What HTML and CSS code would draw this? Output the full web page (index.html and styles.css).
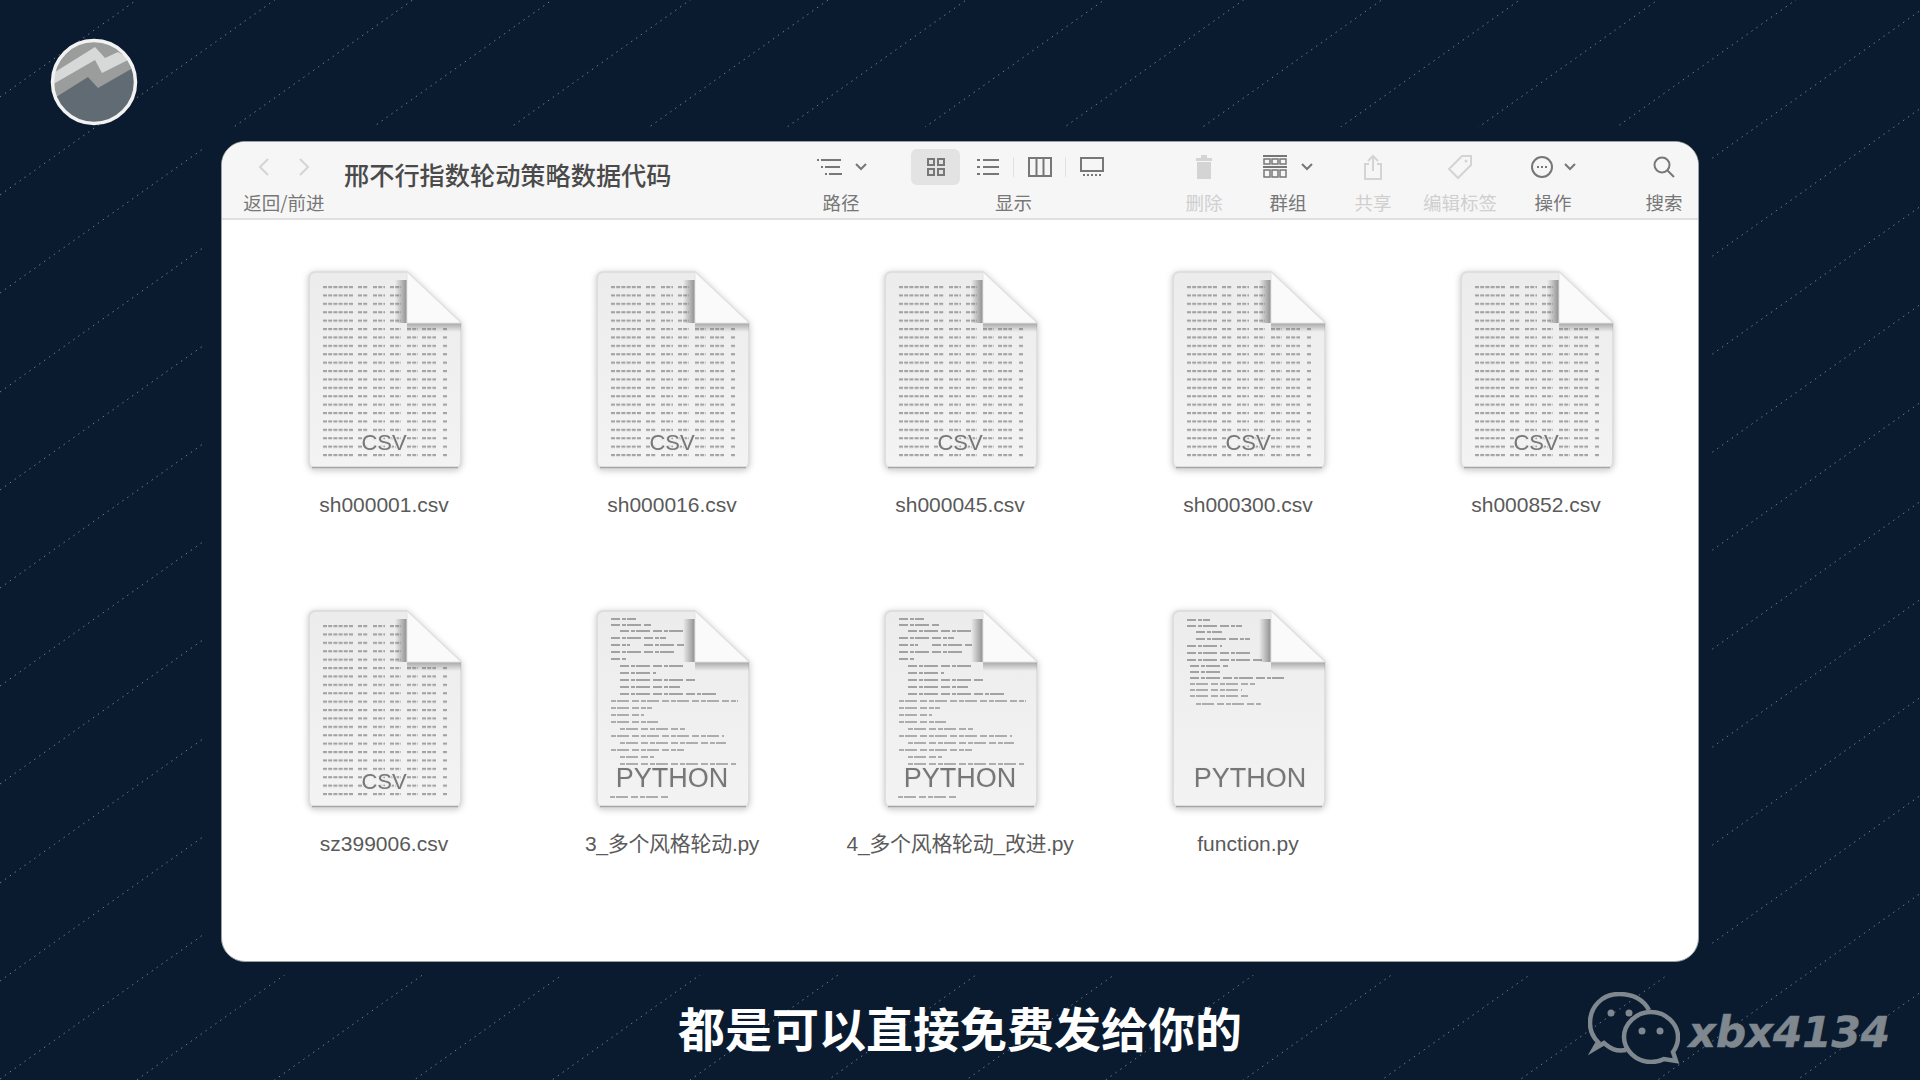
FILE: index.html
```html
<!DOCTYPE html>
<html lang="zh-CN">
<head>
	<title>邢不行指数轮动策略数据代码</title>
	<meta charset="utf-8">
	<link rel="stylesheet" href="styles.css">
</head>
<body>
<svg class="defs">
	<defs>
		<linearGradient id="page" x1="0" y1="0" x2="0" y2="1">
			<stop offset="0" stop-color="#ececec"/>
			<stop offset="1" stop-color="#f3f3f3"/>
		</linearGradient>
		<linearGradient id="fold-left" x1="0" y1="0" x2="1" y2="0">
			<stop offset="0" stop-color="#777" stop-opacity="0"/>
			<stop offset="1" stop-color="#777" stop-opacity=".8"/>
		</linearGradient>
		<linearGradient id="fold-below" x1="0" y1="0" x2="0" y2="1">
			<stop offset="0" stop-color="#777" stop-opacity=".6"/>
			<stop offset="1" stop-color="#777" stop-opacity="0"/>
		</linearGradient>
		<pattern id="rows" x="15" y="15" width="125" height="8.4" patternUnits="userSpaceOnUse">
			<path d="M0 1H30M35 1H45M50 1H62M67 1H78M84 1H95M99 1H113M120 1H124" stroke="#a2a2a2" stroke-width="2" stroke-dasharray="4 1.2" fill="none"/>
		</pattern>
		<clipPath id="margins">
			<path clip-rule="evenodd" d="M0 0H1920V1080H0ZM203 127H1712V975H203Z"/>
		</clipPath>
		<clipPath id="logo-clip"><circle cx="44" cy="44" r="41"/></clipPath>
		<symbol id="doc" viewBox="0 0 156 200">
			<path d="M8 1H99L153 52V190Q153 198 145 198H9Q1 198 1 190V8Q1 1 8 1Z" fill="url(#page)" stroke="#dedede" stroke-width="2"/>
			<path d="M4 196.500H150" stroke="#a4a4a4" stroke-width="1.5"/>
		</symbol>
		<symbol id="fold" viewBox="0 0 156 200">
			<rect x="87" y="9" width="12" height="43" fill="url(#fold-left)"/>
			<rect x="99" y="52" width="54" height="9" fill="url(#fold-below)"/>
			<path d="M99 1L153 52H99Z" fill="#fafafa" stroke="#e2e2e2"/>
		</symbol>
		<symbol id="csv" viewBox="0 0 156 200">
			<use href="#doc"/>
			<g class="doc-lines">
				<rect x="15" y="15" width="78" height="42" fill="url(#rows)"/>
				<rect x="15" y="57" width="125" height="134" fill="url(#rows)"/>
			</g>
			<use href="#fold"/>
			<text class="doc-type" x="76" y="179" font-size="22">CSV</text>
		</symbol>
		<symbol id="py" viewBox="0 0 156 200">
			<use href="#doc"/>
			<g class="doc-lines">
				<path class="code-a" d="M15 9H40M15 15H55M24 21H88M15 28H70M15 35H34M48 35H88M15 42H78M15 49H30M24 56H88M24 63H60M24 70H100M24 77H84M24 84H120"/>
				<path class="code-b" d="M15 91H142M15 98H56M15 105H48M15 112H62M24 119H90M15 126H128M24 133H130M15 140H88M24 147H58M24 154H140"/>
				<path class="code-b" d="M14 187H74"/>
			</g>
			<use href="#fold"/>
			<text class="doc-type" x="76" y="177" font-size="27">PYTHON</text>
		</symbol>
		<symbol id="py-short" viewBox="0 0 156 200">
			<use href="#doc"/>
			<g class="doc-lines">
				<path class="code-a" d="M15 10H38M15 16H70M24 22H50M24 29H78M15 36H50M15 43H80M15 50H90M18 56H56M18 62H50M18 68H112"/>
				<path class="code-b" d="M18 74H84M18 80H70M18 86H76M24 94H90"/>
			</g>
			<use href="#fold"/>
			<text class="doc-type" x="78" y="177" font-size="27">PYTHON</text>
		</symbol>
	</defs>
</svg>

<div class="stage">
	<svg class="streaks" width="1920" height="1080">
		<path clip-path="url(#margins)" d="M0 97l2704-1920M0 195l2704-1920M0 293l2704-1920M0 392l2704-1920M0 490l2704-1920M0 588l2704-1920M0 686l2704-1920M0 784l2704-1920M0 883l2704-1920M0 981l2704-1920M0 1079l2704-1920M0 1177l2704-1920M0 1275l2704-1920M0 1374l2704-1920M0 1472l2704-1920M0 1570l2704-1920M0 1668l2704-1920M0 1766l2704-1920M0 1865l2704-1920M0 1963l2704-1920M0 2061l2704-1920M0 2159l2704-1920M0 2257l2704-1920M0 2356l2704-1920M0 2454l2704-1920"/>
	</svg>

	<header class="top">
		<svg class="logo" width="88" height="88" viewBox="0 0 88 88">
			<circle cx="44" cy="44" r="42" fill="#9b9d9d"/>
			<g clip-path="url(#logo-clip)">
				<path d="M0 37L45 9L55 20L68 14L80 21L52 35L45 22L0 48Z" fill="#d7d8d8"/>
				<path d="M0 63L38 39L48 50L88 27V88H0Z" fill="#606b73"/>
			</g>
			<circle cx="44" cy="44" r="41.500" fill="none" stroke="#f2f2f2" stroke-width="3.500"/>
		</svg>
	</header>

	<main class="window">
		<div class="toolbar">
			<div class="tool tool-nav">
				<div class="tool-icons nav-icons">
					<svg width="20" height="24" viewBox="0 0 20 24"><path class="ic-faint" d="M14 4L6 12L14 20"/></svg>
					<svg width="20" height="24" viewBox="0 0 20 24"><path class="ic-faint" d="M6 4L14 12L6 20"/></svg>
				</div>
				<div class="tool-label">返回/前进</div>
			</div>
			<h1 class="title">邢不行指数轮动策略数据代码</h1>
			<div class="tool tool-path">
				<div class="tool-icons">
					<svg width="28" height="20" viewBox="0 0 28 20"><path class="ic" d="M1 3H3M5 3H25M5 10H7M9 10H24M9 17H11M13 17H26"/></svg>
					<svg class="chev" width="12" height="8" viewBox="0 0 12 8"><path class="ic" d="M1 1L6 6L11 1"/></svg>
				</div>
				<div class="tool-label">路径</div>
			</div>
			<div class="tool tool-view">
				<div class="tool-icons view-icons">
					<div class="view-btn active">
						<svg width="20" height="20" viewBox="0 0 20 20"><path class="ic" d="M2 2H8V8H2ZM12 2H18V8H12ZM2 12H8V18H2ZM12 12H18V18H12Z"/></svg>
					</div>
					<div class="view-btn">
						<svg width="22" height="18" viewBox="0 0 22 18"><path class="ic" d="M0 2H3M6 2H22M0 9H3M6 9H22M0 16H3M6 16H22"/></svg>
					</div>
					<div class="view-btn sep">
						<svg width="24" height="20" viewBox="0 0 24 20"><path class="ic" d="M1 1H23V19H1ZM8.500 1V19M15.500 1V19"/></svg>
					</div>
					<div class="view-btn sep">
						<svg width="24" height="20" viewBox="0 0 24 20"><path class="ic" d="M1 1H23V14H1Z"/><path class="ic" stroke-dasharray="2 2" d="M3 18H22"/></svg>
					</div>
				</div>
				<div class="tool-label">显示</div>
			</div>
			<div class="tool tool-delete">
				<div class="tool-icons">
					<svg width="18" height="26" viewBox="0 0 18 26"><path d="M6 1H12V4H17V7H1V4H6ZM2 8H16V25H2Z" fill="#d4d4d4"/></svg>
				</div>
				<div class="tool-label faint">删除</div>
			</div>
			<div class="tool tool-group">
				<div class="tool-icons">
					<svg width="24" height="24" viewBox="0 0 24 24"><path class="ic" d="M0 1H24M0 12H24"/><path class="ic-thin" d="M1 4H7V9H1ZM9 4H15V9H9ZM17 4H23V9H17ZM1 15H7V22H1ZM9 15H15V22H9ZM17 15H23V22H17Z"/></svg>
					<svg class="chev chev-far" width="12" height="8" viewBox="0 0 12 8"><path class="ic" d="M1 1L6 6L11 1"/></svg>
				</div>
				<div class="tool-label">群组</div>
			</div>
			<div class="tool tool-share">
				<div class="tool-icons">
					<svg width="20" height="26" viewBox="0 0 20 26"><path class="ic-faint" d="M6 10H2V25H18V10H14M10 17V2M5 7L10 2L15 7"/></svg>
				</div>
				<div class="tool-label faint">共享</div>
			</div>
			<div class="tool tool-tag">
				<div class="tool-icons">
					<svg width="26" height="26" viewBox="0 0 26 26"><path class="ic-faint" d="M15 2H24V11L11 24L2 15Z"/><circle cx="19" cy="7" r="1.500" fill="#d4d4d4"/></svg>
				</div>
				<div class="tool-label faint">编辑标签</div>
			</div>
			<div class="tool tool-ops">
				<div class="tool-icons">
					<svg width="22" height="22" viewBox="0 0 22 22"><circle class="ic" cx="11" cy="11" r="10"/><path d="M6 10h2v2H6zM10 10h2v2h-2zM14 10h2v2h-2z" fill="#777"/></svg>
					<svg class="chev" width="12" height="8" viewBox="0 0 12 8"><path class="ic" d="M1 1L6 6L11 1"/></svg>
				</div>
				<div class="tool-label">操作</div>
			</div>
			<div class="tool tool-search">
				<div class="tool-icons">
					<svg width="22" height="22" viewBox="0 0 22 22"><circle class="ic" cx="9" cy="9" r="7.500"/><path class="ic" d="M14.500 14.500L21 21"/></svg>
				</div>
				<div class="tool-label">搜索</div>
			</div>
		</div>

		<div class="files">
			<div class="file"><svg class="file-icon"><use href="#csv"/></svg><div class="file-name">sh000001.csv</div></div>
			<div class="file"><svg class="file-icon"><use href="#csv"/></svg><div class="file-name">sh000016.csv</div></div>
			<div class="file"><svg class="file-icon"><use href="#csv"/></svg><div class="file-name">sh000045.csv</div></div>
			<div class="file"><svg class="file-icon"><use href="#csv"/></svg><div class="file-name">sh000300.csv</div></div>
			<div class="file"><svg class="file-icon"><use href="#csv"/></svg><div class="file-name">sh000852.csv</div></div>
			<div class="file"><svg class="file-icon"><use href="#csv"/></svg><div class="file-name">sz399006.csv</div></div>
			<div class="file"><svg class="file-icon"><use href="#py"/></svg><div class="file-name wide">3_多个风格轮动.py</div></div>
			<div class="file"><svg class="file-icon"><use href="#py"/></svg><div class="file-name wide">4_多个风格轮动_改进.py</div></div>
			<div class="file"><svg class="file-icon"><use href="#py-short"/></svg><div class="file-name">function.py</div></div>
		</div>
	</main>

	<footer class="bottom">
		<div></div>
		<div class="caption">都是可以直接免费发给你的</div>
		<div class="watermark">
			<svg width="92" height="72" viewBox="0 0 92 72">
				<path class="wm-line" d="M61 18C55 7 44 2 31 2C14 2 2 15 2 31C2 39 5 45 10 50L6 57L16 51C21 55 26 60 38 58"/>
				<path class="wm-line" d="M63 20C48 20 36 32 36 45C36 58 48 70 63 70C68 70 72 69 76 67L88 69L85 60C88 56 90 51 90 45C90 32 78 20 63 20Z"/>
				<circle cx="23" cy="21" r="3.500" fill="#7f878f"/>
				<circle cx="41" cy="21" r="3.500" fill="#7f878f"/>
				<circle cx="54" cy="39" r="3.500" fill="#7f878f"/>
				<circle cx="72" cy="39" r="3.500" fill="#7f878f"/>
			</svg>
			<span class="wm-text">xbx4134</span>
		</div>
	</footer>
</div>
</body>
</html>
```

FILE: styles.css
```css
* {
	box-sizing: border-box;
}
body {
	margin: 0;
	font-family: "Liberation Sans", "Noto Sans CJK SC", sans-serif;
}
.defs {
	position: absolute;
	width: 0;
	height: 0;
}
.stage {
	position: relative;
	width: 1920px;
	height: 1080px;
	overflow: hidden;
	background: #0a1b2f;
}
.streaks {
	position: absolute;
	left: 0;
	top: 0;
}
.streaks path {
	fill: none;
	stroke: #fff;
	stroke-opacity: .42;
	stroke-width: 1;
	stroke-dasharray: 1.5 4.5;
}
.top {
	position: relative;
	height: 141px;
	padding: 38px 0 0 50px;
}
.logo {
	display: block;
}

/* window */
.window {
	position: relative;
	width: 1478px;
	height: 821px;
	margin-left: 221px;
	background: #fff;
	border: 1px solid #9c9fa3;
	border-radius: 24px;
	overflow: hidden;
}
.toolbar {
	display: flex;
	height: 78px;
	padding: 7px 0 0 20px;
	background: #f6f6f6;
	border-bottom: 2px solid #e0e0e0;
}
.title {
	margin: 8px 0 0 18px;
	width: 326px;
	font: 500 25.200px/34px "Noto Sans CJK SC", sans-serif;
	color: #4a4a4a;
	white-space: nowrap;
}
.tool {
	display: flex;
	flex-direction: column;
	align-items: center;
	flex: none;
}
.tool-icons {
	display: flex;
	align-items: center;
	justify-content: center;
	height: 36px;
}
.tool-label {
	margin-top: 5px;
	font: 18.500px/24px "Noto Sans CJK SC", sans-serif;
	color: #777;
	white-space: nowrap;
}
.tool-label.faint {
	color: #cfcfcf;
}
.chev {
	margin-left: 11px;
}
.chev-far {
	margin-left: 14px;
}
.nav-icons {
	gap: 20px;
}
.tool-nav { width: 84px; }
.tool-path { width: 70px; margin-left: 136px; }
.tool-view { width: 205px; margin-left: 35px; }
.tool-delete { width: 60px; margin-left: 58px; }
.tool-group { width: 60px; margin-left: 24px; }
.tool-share { width: 60px; margin-left: 25px; }
.tool-tag { width: 84px; margin-left: 15px; }
.tool-ops { width: 60px; margin-left: 21px; }
.tool-search { width: 60px; margin-left: 51px; }
.view-icons {
	gap: 3px;
}
.view-btn {
	position: relative;
	display: flex;
	align-items: center;
	justify-content: center;
	width: 49px;
	height: 36px;
	border-radius: 6px;
}
.view-btn.active {
	background: #e3e3e3;
}
.view-btn.sep::before {
	content: "";
	position: absolute;
	left: -2px;
	top: 8px;
	height: 20px;
	border-left: 1px solid #e2e2e2;
}
.ic, .ic-thin, .ic-faint {
	fill: none;
	stroke: #777;
	stroke-width: 2;
}
.ic-thin {
	stroke-width: 1.5;
}
.ic-faint {
	stroke: #d4d4d4;
}

/* files */
.files {
	display: grid;
	grid-template-columns: repeat(5, 288px);
	grid-auto-rows: 246px;
	row-gap: 93px;
	padding: 51px 0 0 18px;
}
.file {
	display: flex;
	flex-direction: column;
	align-items: center;
}
.file-icon {
	width: 156px;
	height: 200px;
	margin: 0 0 22px 3px;
	flex: none;
	filter: drop-shadow(0 1px 3px rgba(0, 0, 0, .2));
}
.file-name {
	font-size: 21px;
	line-height: 24px;
	color: #5a5a5a;
	white-space: nowrap;
}
.file-name.wide {
	letter-spacing: -.3px;
}
.doc-lines {
	filter: blur(.5px);
}
.doc-type {
	font-family: "Liberation Sans", sans-serif;
	text-anchor: middle;
	fill: #777;
	stroke: #eee;
	stroke-width: 2;
	paint-order: stroke;
}
.code-a, .code-b {
	fill: none;
	stroke: #a2a2a2;
	stroke-width: 2;
}
.code-a {
	stroke-dasharray: 9 2 4 1 14 3;
}
.code-b {
	stroke-dasharray: 5 1 12 3 7 2;
	stroke: #adadad;
}

/* bottom strip */
.bottom {
	position: relative;
	display: grid;
	grid-template-columns: 1fr auto 1fr;
	align-items: center;
	height: 118px;
	padding: 16px 30px 0 0;
}
.caption {
	font: 700 47px/64px "Noto Sans CJK SC", sans-serif;
	color: #fff;
	margin: 0 0 4px 30px;
	white-space: nowrap;
}
.watermark {
	display: flex;
	align-items: center;
	justify-content: flex-end;
	gap: 9px;
	margin-top: -3px;
}
.wm-line {
	fill: none;
	stroke: #7f878f;
	stroke-width: 4.500;
}
.wm-text {
	margin-top: 10px;
	font: italic bold 42px/50px "DejaVu Sans", sans-serif;
	color: #7f878f;
	-webkit-text-stroke: .6px #7f878f;
}
```
